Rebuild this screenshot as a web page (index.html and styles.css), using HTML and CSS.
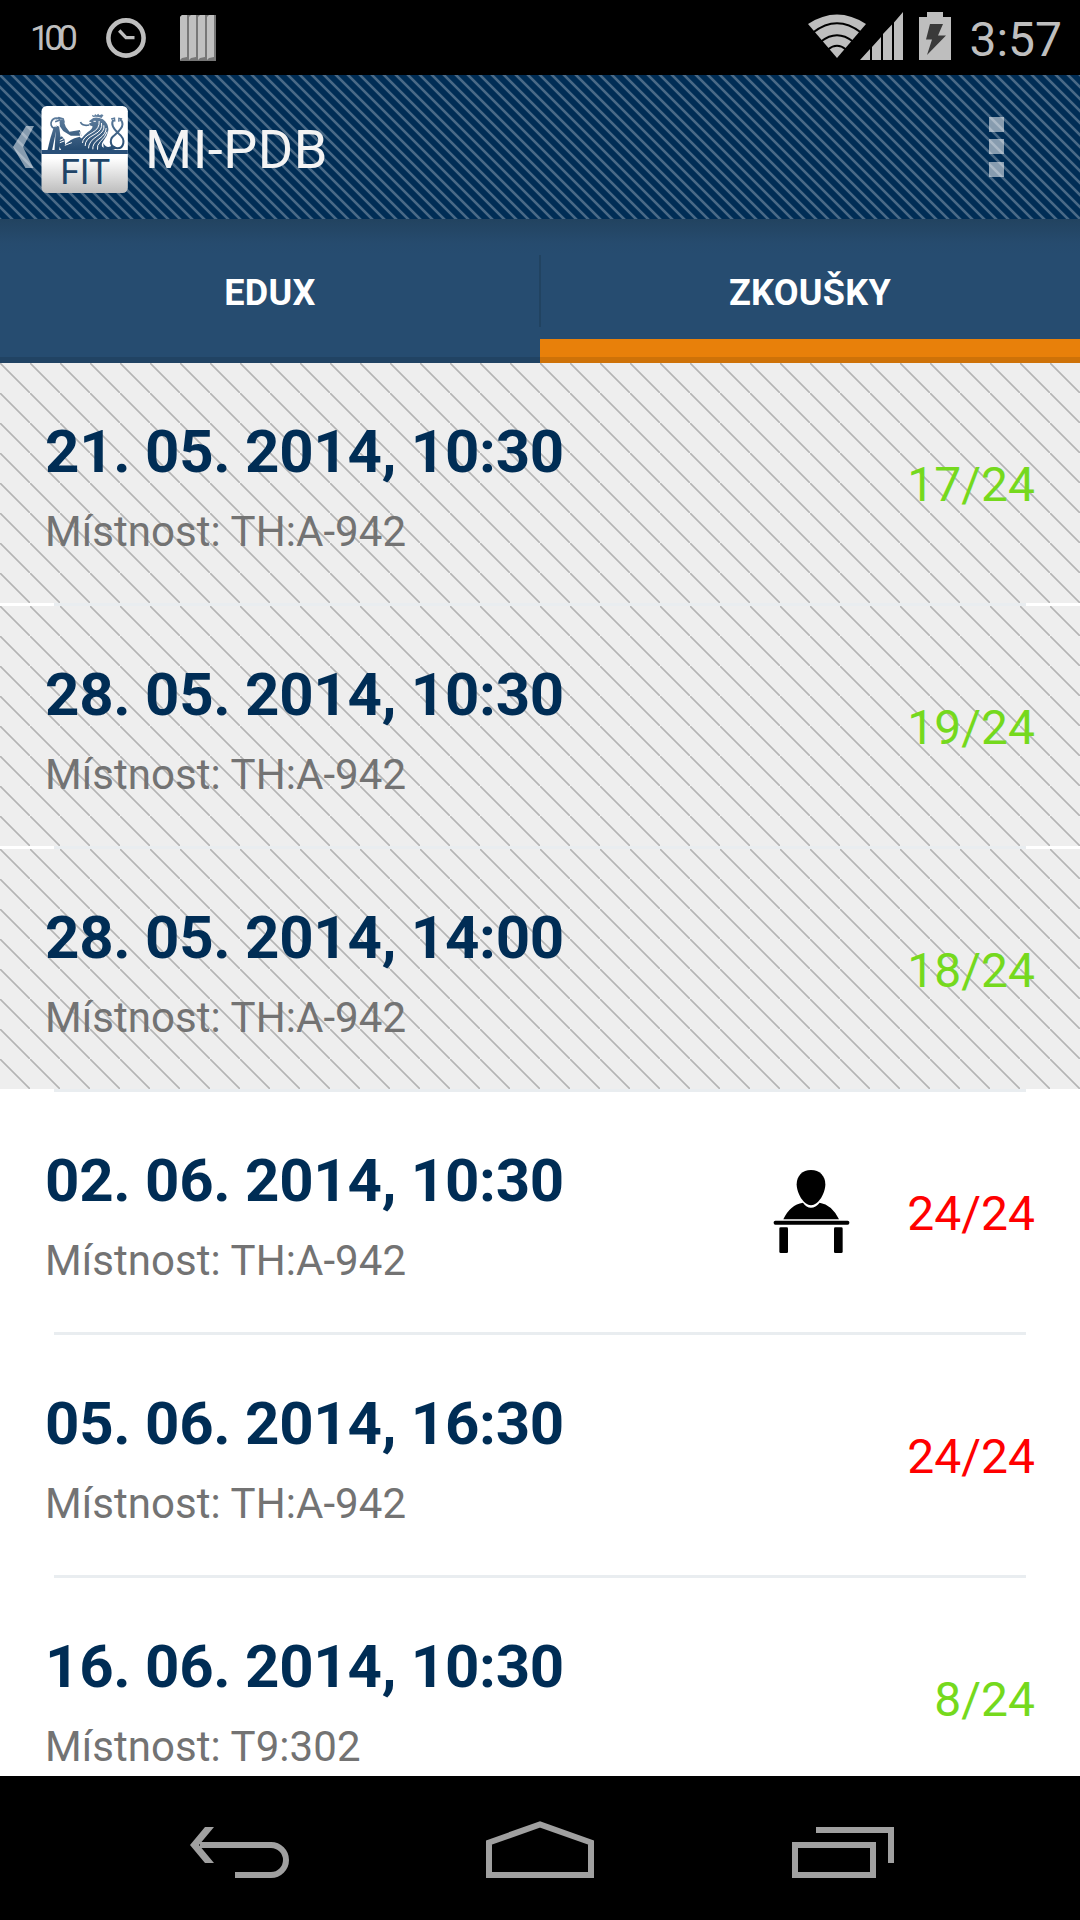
FILE: index.html
```html
<!DOCTYPE html>
<html lang="cs">
<head>
<meta charset="utf-8">
<title>MI-PDB</title>
<link rel="stylesheet" href="styles.css">
</head>
<body>
<div class="screen">
  <header class="status">
    <span class="status-level">100</span>
    <svg class="status-alarm" width="42" height="42" viewBox="0 0 42 42"><circle cx="21" cy="21" r="17.6" fill="none" stroke="#bebebe" stroke-width="4.6"/><path d="M14.2 13.5 21 20.7H29.5" fill="none" stroke="#bebebe" stroke-width="3.3"/></svg>
    <svg class="status-books" width="36" height="46" viewBox="0 0 36 46"><path d="M0 2 2 0H36V46H0Z" fill="#777"/><path d="M0 2 2 0H7V42L2 43 0 45ZM9 2 11 0H16V42L11 43 9 45ZM18 2 20 0H25V42L20 43 18 45ZM27 2 29 0H34V42L29 43 27 45Z" fill="#c0c0c0"/></svg>
    <span class="spacer"></span>
    <svg class="status-net" width="96" height="50" viewBox="0 0 96 50">
      <g fill="#bebebe"><path d="M0 13Q29-6 58 13L29 47Z"/><path d="M52 49 62 38V49ZM64 49V36L73 26V49ZM75 49V23L84 13.500V49ZM86 49V11.500L95 1V49Z"/></g>
      <path d="M5 21.500Q29 3 53 21.500M13 30.500Q29 18 45 30.500M20 38.500Q29 31 38 38.500" fill="none" stroke="#000" stroke-width="1.9"/>
    </svg>
    <svg class="status-battery" width="32" height="48" viewBox="0 0 32 48"><path d="M8 0H24V5H32V48H0V5H8Z" fill="#bebebe"/><path d="M11 12H24L19 23.500H27L8 43 13 27.500H7Z" fill="#3a3a3a"/></svg>
    <span class="status-time">3:57</span>
  </header>

  <div class="action-bar">
    <svg class="up" width="21" height="42" viewBox="0 0 21 42"><path d="M13 0H21L10 21 20.500 42H12.500L0 21Z" fill="#fff" fill-opacity=".53"/></svg>
    <svg class="logo" width="87" height="87" viewBox="35 33 260 261">
      <defs>
        <linearGradient id="plate" x1="0" y1="0" x2="0" y2="1"><stop offset=".6" stop-color="#fff"/><stop offset="1" stop-color="#bcbcbc"/></linearGradient>
        <linearGradient id="ink" gradientUnits="userSpaceOnUse" x1="0" y1="55" x2="0" y2="165"><stop offset="0" stop-color="#6583a2"/><stop offset="1" stop-color="#244a70"/></linearGradient>
      </defs>
      <rect x="36" y="33" width="259" height="261" rx="16" fill="url(#plate)"/>
      <rect x="36" y="165" width="259" height="12" fill="#2a5079"/>
      <g fill="url(#ink)">
        <path d="M73 96 83 92 68 165H54Q62 128 73 96Z"/>
        <path d="M80 91 89 95 94 132 89 165H75Z"/>
        <path d="M90 80Q96 67 102 77L109 96 120 110 151 105 156 122 124 122 101 108 91 94Z"/>
        <path d="M90 128 97 124 105 133 107 151 127 154 151 143 163 165H95L88 152Z"/>
        <path d="M104 153Q116 133 151 125L159 133 155 146Q133 149 125 161Z"/>
        <path d="M184 74Q193 65 210 69 222 71 227 79 239 93 236 109 233 124 223 136 214 148 218 155L235 165H155Q145 144 155 132 163 121 175 111 190 102 189 94L180 91 179 85 187 83 178 79Z"/>
        <path d="M190 66 187 59 194 62 197 57 201 61 206 56 210 61 217 58 222 61 216 69Q203 63 190 66Z"/>
        <path d="M221 144Q233 165 249 150L264 158Q246 171 223 162Z"/>
      </g>
      <g fill="none" stroke="url(#ink)" stroke-width="5">
        <path d="M91 72C66 62 55 91 74 100M80 72 88 68 101 72 104 83M77 80 94 74M153 81Q158 94 179 90"/>
        <path d="M252 74C242 88 253 103 268 116 291 134 282 160 264 160 244 160 238 136 251 124 261 114 279 103 279 88 279 79 276 76 271 74" stroke-width="6"/>
        <path d="M245 72 255 69 256 80M268 80 268 70 278 72" stroke-width="4"/>
      </g>
      <g fill="none" stroke="#fff" stroke-width="3">
        <path d="M209 78Q211 101 188 113 159 128 159 144M216 84Q221 105 194 119 166 133 167 153M223 91Q227 108 202 124 177 140 177 160M230 99Q230 117 208 132 188 146 190 163M233 110Q227 127 213 139 201 151 204 164"/>
        <path d="M192 79H199M78 95 90 88M91 136 102 131M91 143 104 138M155 129 151 111M106 151 127 143"/>
      </g>
      <text class="logo-text" x="92" y="267" textLength="150" lengthAdjust="spacingAndGlyphs">FIT</text>
    </svg>
    <h1 class="title">MI-PDB</h1>
    <span class="spacer"></span>
    <div class="overflow"><i></i><i></i><i></i></div>
  </div>

  <nav class="tabs">
    <div class="tab">EDUX</div>
    <div class="tab tab-active">ZKOUŠKY</div>
  </nav>

  <main class="list">
    <section class="row past"><div class="info"><h2>21. 05. 2014, 10:30</h2><p>Místnost: TH:A-942</p></div><span class="count free">17/24</span></section>
    <hr>
    <section class="row past"><div class="info"><h2>28. 05. 2014, 10:30</h2><p>Místnost: TH:A-942</p></div><span class="count free">19/24</span></section>
    <hr>
    <section class="row past"><div class="info"><h2>28. 05. 2014, 14:00</h2><p>Místnost: TH:A-942</p></div><span class="count free">18/24</span></section>
    <hr>
    <section class="row"><div class="info"><h2>02. 06. 2014, 10:30</h2><p>Místnost: TH:A-942</p></div>
      <svg class="desk" width="80" height="90" viewBox="96 318 240 270"><path d="M213 327C239 327 256 345 256 370 256 397 235 433 213 433S170 397 170 370C170 345 187 327 213 327Z"/><path d="M130 475Q150 431 189 425 199 440 213 440T239 425Q276 431 297 475Z"/><rect x="101" y="479" width="227" height="12" rx="5"/><rect x="118" y="499" width="26" height="77" rx="4"/><rect x="282" y="499" width="26" height="77" rx="4"/></svg>
      <span class="count full">24/24</span></section>
    <hr>
    <section class="row"><div class="info"><h2>05. 06. 2014, 16:30</h2><p>Místnost: TH:A-942</p></div><span class="count full">24/24</span></section>
    <hr>
    <section class="row"><div class="info"><h2>16. 06. 2014, 10:30</h2><p>Místnost: T9:302</p></div><span class="count free">8/24</span></section>
  </main>

  <footer class="navbar">
    <svg width="120" height="144" viewBox="30 0 120 144"><path d="M50 69H121A15 15 0 0 1 121 99H85" fill="none" stroke="#a0a0a0" stroke-width="6"/><path d="M55 51H64L49 69 64 87H55L40 69Z" fill="#a0a0a0"/></svg>
    <svg width="120" height="144" viewBox="0 0 120 144"><path d="M9 99V66.500L60 48.500 111 66.500V99Z" fill="none" stroke="#a0a0a0" stroke-width="6"/></svg>
    <svg width="120" height="144" viewBox="140 0 120 144"><path d="M155 69H233V99H155ZM176 54H251V87" fill="none" stroke="#a0a0a0" stroke-width="6"/></svg>
  </footer>
</div>
</body>
</html>
```
FILE: styles.css
```css
* { box-sizing: border-box; margin: 0; padding: 0; }
body { background: #000; font-family: Roboto, sans-serif; }
svg { display: block; flex: none; }

.screen { width: 1080px; height: 1920px; display: flex; flex-direction: column; overflow: hidden; }
.spacer { flex: 1; }

.status { flex: none; height: 75px; display: flex; align-items: flex-start; padding: 0 18px 0 30px; background: #000; color: #bebebe; }
.status-level { width: 75px; padding-top: 17px; font-size: 35px; line-height: 43px; letter-spacing: -5.500px; }
.status-alarm { margin-top: 17px; }
.status-books { margin: 15px 0 0 33px; }
.status-net { margin: 11px 15px 0 0; }
.status-battery { margin-top: 12px; }
.status-time { width: 111px; padding-top: 11px; font-size: 48px; line-height: 57px; text-align: right; }

.action-bar { flex: none; height: 144px; display: flex; align-items: center; padding: 0 76px 0 13px; background-color: #002d55; background-image: linear-gradient(45deg, #496986 0, #496986 5%, #002d55 10%, #002d55 40%, #496986 45%, #496986 55%, #002d55 60%, #002d55 90%, #496986 95%); background-size: 12px 12px; }
.up { margin-right: 7px; }
.logo { margin-top: 5px; }
.logo-text { font-family: Roboto, sans-serif; font-size: 105px; fill: #204467; }
.title { margin-left: 17px; padding-top: 6px; font-size: 54px; font-weight: 400; line-height: 64px; letter-spacing: .5px; color: #f3f3f3; }
.overflow { display: flex; flex-direction: column; gap: 7.500px; padding-bottom: 1px; }
.overflow i { width: 15px; height: 15px; background: rgba(255, 255, 255, .53); }

.tabs { flex: none; position: relative; height: 144px; display: grid; grid-template-columns: 1fr 1fr; background: linear-gradient(#224360 0, #264b6e 24px, #264c70 36px); }
.tab { display: flex; align-items: center; justify-content: center; font-size: 36px; font-weight: 700; line-height: 42px; letter-spacing: .3px; color: #fff; padding-top: 3px; border-bottom: 0 solid #e8800a; }
.tab-active { border-bottom-width: 24px; padding-top: 27px; }
.tabs::before { content: ""; position: absolute; left: 539px; top: 36px; width: 2px; height: 72px; background: #214361; }
.tabs::after { content: ""; position: absolute; inset: auto 0 0; height: 6px; background: rgba(0, 0, 0, .11); }

.list { flex: 1; min-height: 0; overflow: hidden; background: #fff; }
.list hr { height: 3px; border: 0; margin: 0 54px; background: #e9edf0; }
.row { height: 240px; display: flex; align-items: center; padding: 0 45px; }
.past { background-color: #eee; background-image: linear-gradient(45deg, rgba(176, 176, 176, 0) 47%, #b4b4b4 49%, #b4b4b4 51%, rgba(176, 176, 176, 0) 53%); background-size: 30px 30px; }
.info { flex: 1; padding-top: 18px; }
.info h2 { font-size: 60px; font-weight: 700; line-height: 80px; letter-spacing: -.28px; color: #002d55; }
.info p { font-size: 42px; line-height: 80px; letter-spacing: .07px; color: #737373; }
.desk { margin-right: 55px; }
.count { padding-top: 3px; font-size: 48px; line-height: 56px; }
.free { color: #75d91d; }
.full { color: #f00; }

.navbar { flex: none; height: 144px; display: flex; justify-content: space-between; padding: 0 180px; background: #000; }
```
